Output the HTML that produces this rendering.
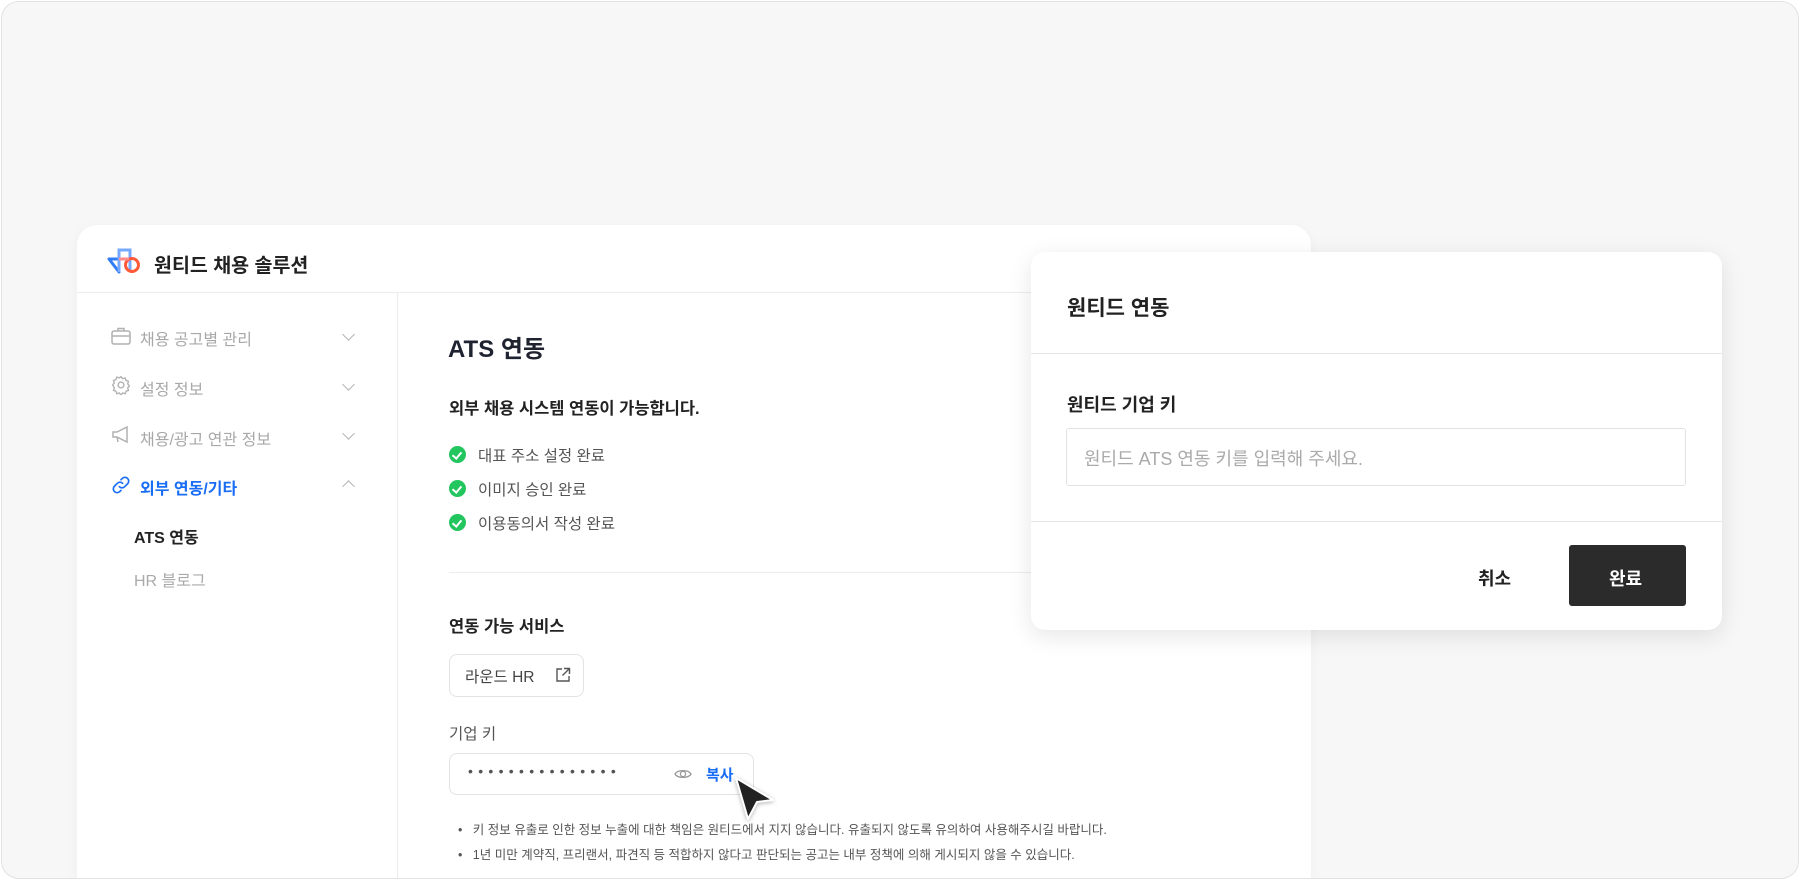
<!DOCTYPE html>
<html><head><meta charset="utf-8"><style>
*{margin:0;padding:0;box-sizing:border-box}
body{width:1800px;height:880px;overflow:hidden;background:#fff;font-family:"Liberation Sans","Noto Sans CJK KR",sans-serif;position:relative}
.frame{position:absolute;left:1px;top:1px;width:1798px;height:878px;border:1px solid #e2e2e2;border-radius:18px;background:#f7f7f7;overflow:hidden}
.card{position:absolute;left:75px;top:223px;width:1234px;height:656px;background:#fff;border-radius:20px 20px 0 0;box-shadow:0 2px 12px rgba(0,0,0,.04);overflow:hidden}
.abs{position:absolute;white-space:nowrap}
.hdr{position:absolute;left:0;top:67px;width:100%;height:1px;background:#ececec}
.side{position:absolute;left:320px;top:68px;width:1px;height:600px;background:#ececec}
.mi{font-size:16px;color:#a8a8a8}
.chev{position:absolute;width:9px;height:9px;border-right:1.6px solid #b5b5b5;border-bottom:1.6px solid #b5b5b5}
.chk{position:absolute;width:17px;height:17px;border-radius:50%;background:#22c55e}
.chk:after{content:"";position:absolute;left:5px;top:4px;width:4px;height:7px;border-right:2px solid #fff;border-bottom:2px solid #fff;transform:rotate(40deg)}
.ct{font-size:15.5px;color:#555}
.modal{position:absolute;left:1029px;top:250px;width:691px;height:378px;background:#fff;border-radius:14px;box-shadow:0 6px 24px rgba(0,0,0,.10)}
</style></head><body>
<div class="frame">
<div class="card">
 <svg class="abs" style="left:30px;top:21px" width="38" height="28" viewBox="0 0 38 28">
  <path d="M2 13 L12 13 L12 26 Z" fill="none" stroke="#2f7cf6" stroke-width="3" stroke-linejoin="round"/>
  <path d="M12 26 V4 H23 V24" fill="none" stroke="#77a8ff" stroke-width="3"/>
  <circle cx="25" cy="19" r="6.5" fill="none" stroke="#ff5a3a" stroke-width="3"/>
  <path d="M12 13 H22" stroke="#ff8a8a" stroke-width="3"/>
 </svg>
 <div class="abs" style="left:77px;top:24px;font-size:19.5px;font-weight:bold;color:#222">원티드 채용 솔루션</div>
 <div class="hdr"></div>
 <div class="side"></div>
 <svg class="abs" style="left:34px;top:102px" width="20" height="18" viewBox="0 0 20 18" fill="none" stroke="#b0b0b0" stroke-width="1.5"><rect x="1" y="4" width="18" height="13" rx="2"/><path d="M7 4V1.5h6V4M1 9h18"/></svg>
 <div class="abs mi" style="left:63px;top:101px">채용 공고별 관리</div>
 <div class="chev" style="left:267px;top:105px;transform:rotate(45deg)"></div>
 <svg class="abs" style="left:34px;top:150px" width="20" height="20" viewBox="0 0 24 24" fill="none" stroke="#b0b0b0" stroke-width="1.6"><circle cx="12" cy="12" r="3.5"/><path d="M12 2l2 2.5 3-1 1 3 3 1-1 3 2 2.5-2 2.5 1 3-3 1-1 3-3-1-2 2.5-2-2.5-3 1-1-3-3-1 1-3L2 12l2-2.5-1-3 3-1 1-3 3 1z"/></svg>
 <div class="abs mi" style="left:63px;top:151px">설정 정보</div>
 <div class="chev" style="left:267px;top:155px;transform:rotate(45deg)"></div>
 <svg class="abs" style="left:34px;top:201px" width="20" height="18" viewBox="0 0 20 18" fill="none" stroke="#b0b0b0" stroke-width="1.5"><path d="M2 6h4l10-5v15L6 11H2z M6 11l1 5"/></svg>
 <div class="abs mi" style="left:63px;top:201px">채용/광고 연관 정보</div>
 <div class="chev" style="left:267px;top:204px;transform:rotate(45deg)"></div>
 <svg class="abs" style="left:34px;top:250px" width="20" height="20" viewBox="0 0 24 24" fill="none" stroke="#1a6ef5" stroke-width="2" stroke-linecap="round"><path d="M10 14a4.5 4.5 0 0 0 6.4 0l3.5-3.5a4.5 4.5 0 0 0-6.4-6.4L12 5.6"/><path d="M14 10a4.5 4.5 0 0 0-6.4 0l-3.5 3.5a4.5 4.5 0 0 0 6.4 6.4l1.5-1.5"/></svg>
 <div class="abs" style="left:63px;top:250px;font-size:16px;color:#1a6ef5;font-weight:bold">외부 연동/기타</div>
 <div class="chev" style="left:267px;top:257px;transform:rotate(-135deg)"></div>
 <div class="abs" style="left:57px;top:299px;font-size:16px;font-weight:bold;color:#222">ATS 연동</div>
 <div class="abs" style="left:57px;top:342px;font-size:16px;color:#aaa">HR 블로그</div>
 <div class="abs" style="left:371px;top:104px;font-size:24px;font-weight:bold;color:#1f2330">ATS 연동</div>
 <div class="abs" style="left:372px;top:170px;font-size:16.5px;font-weight:bold;color:#222">외부 채용 시스템 연동이 가능합니다.</div>
 <div class="chk" style="left:372px;top:221px"></div><div class="abs ct" style="left:401px;top:219px">대표 주소 설정 완료</div>
 <div class="chk" style="left:372px;top:255px"></div><div class="abs ct" style="left:401px;top:253px">이미지 승인 완료</div>
 <div class="chk" style="left:372px;top:289px"></div><div class="abs ct" style="left:401px;top:287px">이용동의서 작성 완료</div>
 <div class="abs" style="left:372px;top:347px;width:816px;height:1px;background:#ececec"></div>
 <div class="abs" style="left:372px;top:388px;font-size:16.5px;font-weight:bold;color:#222">연동 가능 서비스</div>
 <div class="abs" style="left:372px;top:429px;width:135px;height:43px;border:1px solid #e3e3e3;border-radius:8px"></div>
 <div class="abs" style="left:388px;top:440px;font-size:15.5px;color:#444">라운드 HR</div>
 <svg class="abs" style="left:478px;top:442px" width="16" height="16" viewBox="0 0 16 16" fill="none" stroke="#555" stroke-width="1.4"><path d="M7 2H2v12h12V9M9 1.5h5.5V7M14.5 1.5L7.5 8.5"/></svg>
 <div class="abs" style="left:372px;top:497px;font-size:15.5px;color:#555">기업 키</div>
 <div class="abs" style="left:372px;top:528px;width:305px;height:42px;border:1px solid #e3e3e3;border-radius:8px"></div>
 <div class="abs" style="left:391px;top:538px;font-size:14px;color:#555;letter-spacing:5.3px">•••••••••••••••</div>
 <svg class="abs" style="left:597px;top:541px" width="18" height="16" viewBox="0 0 18 16" fill="none" stroke="#999" stroke-width="1.3"><path d="M1 8c2.5-4.5 13.5-4.5 16 0-2.5 4.5-13.5 4.5-16 0z"/><circle cx="9" cy="8" r="2.6"/></svg>
 <div class="abs" style="left:629px;top:539px;font-size:15px;color:#1a6ef5;font-weight:bold">복사</div>
 <div class="abs" style="left:381px;top:594px;font-size:12.5px;color:#555">•&nbsp;&nbsp; 키 정보 유출로 인한 정보 누출에 대한 책임은 원티드에서 지지 않습니다. 유출되지 않도록 유의하여 사용해주시길 바랍니다.</div>
 <div class="abs" style="left:381px;top:619px;font-size:12.5px;color:#555">•&nbsp;&nbsp; 1년 미만 계약직, 프리랜서, 파견직 등 적합하지 않다고 판단되는 공고는 내부 정책에 의해 게시되지 않을 수 있습니다.</div>
 <svg class="abs" style="left:654px;top:548px;filter:drop-shadow(0 1px 2px rgba(0,0,0,.3))" width="46" height="50" viewBox="0 0 46 50"><path d="M5 5 L42 27 L26 29 L17 46 Z" fill="#222" stroke="#fff" stroke-width="2" stroke-linejoin="round"/></svg>
</div>
<div class="modal">
 <div class="abs" style="left:36px;top:40px;font-size:21px;font-weight:bold;color:#222">원티드 연동</div>
 <div class="abs" style="left:0;top:101px;width:100%;height:1px;background:#e6e6e6"></div>
 <div class="abs" style="left:36px;top:139px;font-size:18px;font-weight:bold;color:#222">원티드 기업 키</div>
 <div class="abs" style="left:35px;top:176px;width:620px;height:58px;border:1px solid #e2e2e2;border-radius:3px"></div>
 <div class="abs" style="left:53px;top:193px;font-size:18px;color:#aaa">원티드 ATS 연동 키를 입력해 주세요.</div>
 <div class="abs" style="left:0;top:269px;width:100%;height:1px;background:#e6e6e6"></div>
 <div class="abs" style="left:447px;top:313px;font-size:18px;font-weight:bold;color:#222">취소</div>
 <div class="abs" style="left:538px;top:293px;width:117px;height:61px;background:#2b2b2b;border-radius:3px"></div>
 <div class="abs" style="left:578px;top:313px;font-size:18px;font-weight:bold;color:#fff">완료</div>
</div>
</div>
</body></html>
